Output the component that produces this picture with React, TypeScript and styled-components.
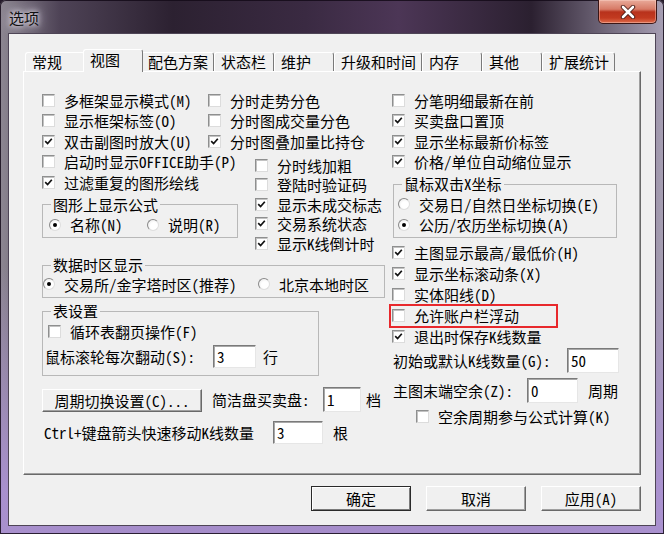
import styled, { createGlobalStyle, css } from 'styled-components'
import type { ReactNode } from 'react'

const GlobalStyle = createGlobalStyle`
  html, body { margin: 0; padding: 0; }
  body { width: 664px; height: 534px; overflow: hidden; background: #241a2a; }
`

const Window = styled.div`
  width: 664px;
  height: 534px;
  box-sizing: border-box;
  padding: 0 8px 8px;
  display: flex;
  flex-direction: column;
  border-radius: 6px 6px 0 0;
  box-shadow: inset 0 0 0 1px rgba(20, 10, 25, 0.85);
  background:
    linear-gradient(180deg, rgba(0, 0, 0, 0) 50%, rgba(170, 145, 208, 0.96) 92%),
    linear-gradient(90deg, #8d8792 0%, #4e4356 9%, #2c2131 26%, #3a2a42 46%, #4c3656 60%, #2b2030 80%, #a79fb4 100%);
  font-family: "Noto Sans Mono CJK SC", "Noto Sans CJK SC", sans-serif;
  font-size: 15px;
  color: #000;
`

const TitleBar = styled.div`
  height: 33px;
  display: flex;
  justify-content: space-between;
  align-items: flex-start;
`

const Caption = styled.div`
  margin: 10px 0 0 1px;
  line-height: 16px;
  color: #111;
  text-shadow: 0 0 5px #e6e2ec, 0 0 9px #d8d2e0, 0 0 12px #cfc8d8;
`

const CloseButton = styled.div`
  width: 59px;
  height: 24px;
  margin-right: -1px;
  box-sizing: border-box;
  border: 1px solid #3b1616;
  border-top: none;
  border-radius: 0 0 5px 5px;
  background: linear-gradient(180deg, #e9aa9a 0%, #d77a66 40%, #b8321c 52%, #c23a20 78%, #df6c4c 100%);
  box-shadow: inset 0 0 0 1px rgba(255, 220, 210, 0.4);
  display: flex;
  align-items: center;
  justify-content: center;
`

const Client = styled.div`
  flex: 1;
  background: #f0f0f0;
  border: 1px solid #4e4556;
  padding: 15px 14px 0;
  display: flex;
  flex-direction: column;
`

const TabStrip = styled.div`
  height: 22px;
  display: flex;
  align-items: flex-end;
  padding-left: 2px;
  position: relative;
  z-index: 1;
`

const Tab = styled.div<{ $active?: boolean }>`
  box-sizing: border-box;
  min-width: 60px;
  height: 19px;
  padding: 0 5px 0 6px;
  border: 1px solid;
  border-color: #fff #7a7a7a transparent #fff;
  border-bottom: none;
  border-radius: 3px 3px 0 0;
  background: #f0f0f0;
  line-height: 18px;
  white-space: nowrap;
  ${p => p.$active && css`
    height: 23px;
    margin: 0 -2px -1px;
    line-height: 20px;
    position: relative;
    z-index: 2;
  `}
`

const Pane = styled.div`
  height: 404px;
  box-sizing: border-box;
  border: 1px solid;
  border-color: #fff #696969 #696969 #fff;
  box-shadow: inset -1px -1px 0 #a0a0a0;
  padding: 18px 0 0 18px;
  display: grid;
  grid-template-columns: 350px 1fr;
  align-items: start;
`

const Column = styled.div`
  display: flex;
  flex-direction: column;
  align-items: flex-start;
`

const TopBlock = styled.div`
  display: grid;
  grid-template-columns: 166px 1fr;
  align-items: start;
`

const SubColumn = styled.div<{ $ml: number; $mt: number }>`
  display: flex;
  flex-direction: column;
  margin: ${p => p.$mt}px 0 0 ${p => p.$ml}px;
`

const Row = styled.div<{ $h: number; $mt?: number; $ml?: number; $gap?: number; $mark?: boolean }>`
  height: ${p => p.$h}px;
  margin: ${p => p.$mt ?? 0}px 0 0 ${p => p.$ml ?? 0}px;
  display: flex;
  align-items: center;
  gap: ${p => p.$gap ?? 9}px;
  white-space: nowrap;
  position: relative;
  ${p => p.$mark && css`
    &::after {
      content: '';
      position: absolute;
      left: -3px;
      top: -1px;
      width: 169px;
      height: 24px;
      box-sizing: border-box;
      border: 2px solid #e8282c;
    }
  `}
`

const Box = styled.span`
  flex: none;
  width: 13px;
  height: 13px;
  box-sizing: border-box;
  border: 1px solid;
  border-color: #8e8f8f #dcdcdc #dcdcdc #8e8f8f;
  box-shadow: inset 1px 1px 0 #c2c2c2;
  background: #fff;
  display: inline-flex;
  align-items: center;
  justify-content: center;
`

const Circle = styled.span<{ $on?: boolean }>`
  flex: none;
  width: 12px;
  height: 12px;
  box-sizing: border-box;
  border-radius: 50%;
  border: 1px solid;
  border-color: #8a8a8a #dedede #dedede #8a8a8a;
  background: radial-gradient(circle at 60% 60%, #fff 40%, #e4e4e4 100%);
  display: inline-flex;
  align-items: center;
  justify-content: center;
  &::after {
    content: '';
    width: 4px;
    height: 4px;
    border-radius: 50%;
    background: ${p => (p.$on ? '#000' : 'transparent')};
  }
`

const GroupBox = styled.fieldset<{ $w: number; $mt: number; $pb: number; $ml?: number }>`
  width: ${p => p.$w}px;
  box-sizing: border-box;
  min-width: 0;
  margin: ${p => p.$mt}px 0 0 ${p => p.$ml ?? 0}px;
  padding: 0 0 ${p => p.$pb}px;
  border: 1px solid #b8b8b8;
`

const Legend = styled.legend<{ $h?: number }>`
  margin-left: 8px;
  padding: 0 2px;
  line-height: ${p => p.$h ?? 20}px;
  height: ${p => p.$h ?? 20}px;
`

const RadioItem = styled.div<{ $w?: number }>`
  ${p => p.$w && `width: ${p.$w}px;`}
  display: flex;
  align-items: center;
  gap: 9px;
`

const Label = styled.span<{ $w?: number }>`
  ${p => p.$w && `width: ${p.$w}px;`}
  flex: none;
`

const Field = styled.div<{ $w: number; $h: number }>`
  flex: none;
  width: ${p => p.$w}px;
  height: ${p => p.$h}px;
  box-sizing: border-box;
  border: 1px solid;
  border-color: #7a7a7a #e6e6e6 #e6e6e6 #7a7a7a;
  box-shadow: inset 1px 1px 0 #a8a8a8;
  background: #fff;
  padding-left: 3px;
  line-height: ${p => p.$h - 2}px;
`

const Button = styled.div<{ $w: number; $primary?: boolean }>`
  flex: none;
  width: ${p => p.$w}px;
  height: 23px;
  box-sizing: border-box;
  border: 1px solid;
  border-color: #fff #696969 #696969 #fff;
  box-shadow: inset -1px -1px 0 #a0a0a0;
  background: #f0f0f0;
  line-height: 21px;
  text-align: center;
  ${p => p.$primary && css`
    border-color: #2a2a2a;
    box-shadow: inset 1px 1px 0 #fff, inset -1px -1px 0 #7a7a7a;
  `}
`

const ToolRow = styled.div<{ $h: number; $mt: number; $ml?: number }>`
  height: ${p => p.$h}px;
  margin: ${p => p.$mt}px 0 0 ${p => p.$ml ?? 0}px;
  display: flex;
  align-items: center;
  white-space: nowrap;
`

const Gap = styled.span<{ $w: number }>`
  flex: none;
  width: ${p => p.$w}px;
`

const Footer = styled.div`
  margin-top: 11px;
  display: flex;
  justify-content: flex-end;
  gap: 15px;
  & > div { height: 25px; line-height: 23px; }
`

const Tick = () => (
  <svg width="9" height="9" viewBox="0 0 9 9">
    <path d="M1.2 4.2 L3.6 6.6 L7.8 1.8" fill="none" stroke="#111" strokeWidth="1.7" />
  </svg>
)

type CheckProps = { on?: boolean; children: ReactNode; h?: number; mt?: number; ml?: number; mark?: boolean }

const Check = ({ on, children, h = 20.5, mt, ml, mark }: CheckProps) => (
  <Row $h={h} $mt={mt} $ml={ml} $mark={mark}>
    <Box>{on && <Tick />}</Box>
    <span>{children}</span>
  </Row>
)

const Radio = ({ on, w, children }: { on?: boolean; w?: number; children: ReactNode }) => (
  <RadioItem $w={w}>
    <Circle $on={on} />
    <span>{children}</span>
  </RadioItem>
)

const tabs = ['常规', '视图', '配色方案', '状态栏', '维护', '升级和时间', '内存', '其他', '扩展统计']

export default function App() {
  return (
    <>
      <GlobalStyle />
      <Window>
        <TitleBar>
          <Caption>选项</Caption>
          <CloseButton>
            <svg width="16" height="14" viewBox="0 0 16 14">
              <path d="M3 2 L13 12 M13 2 L3 12" stroke="#4a1a14" strokeWidth="4.4" strokeLinecap="round" />
              <path d="M3 2 L13 12 M13 2 L3 12" stroke="#fff" strokeWidth="2.6" strokeLinecap="round" />
            </svg>
          </CloseButton>
        </TitleBar>
        <Client>
          <TabStrip>
            {tabs.map(t => (
              <Tab key={t} $active={t === '视图'}>{t}</Tab>
            ))}
          </TabStrip>
          <Pane>
            <Column>
              <TopBlock>
                <Column>
                  <Check>多框架显示模式(M)</Check>
                  <Check>显示框架标签(O)</Check>
                  <Check on>双击副图时放大(U)</Check>
                  <Check>启动时显示OFFICE助手(P)</Check>
                  <Check on>过滤重复的图形绘线</Check>
                  <GroupBox $w={196} $mt={2} $pb={2}>
                    <Legend>图形上显示公式</Legend>
                    <Row $h={20.5} $ml={6} $gap={0}>
                      <Radio on w={98}>名称(N)</Radio>
                      <Radio>说明(R)</Radio>
                    </Row>
                  </GroupBox>
                </Column>
                <Column>
                  <Check>分时走势分色</Check>
                  <Check>分时图成交量分色</Check>
                  <Check on>分时图叠加量比持仓</Check>
                  <SubColumn $ml={47} $mt={4}>
                    <Check h={19.5}>分时线加粗</Check>
                    <Check h={19.5}>登陆时验证码</Check>
                    <Check h={19.5} on>显示未成交标志</Check>
                    <Check h={19.5} on>交易系统状态</Check>
                    <Check h={19.5} on>显示K线倒计时</Check>
                  </SubColumn>
                </Column>
              </TopBlock>
              <GroupBox $w={343} $mt={3} $pb={3}>
                <Legend $h={18}>数据时区显示</Legend>
                <Row $h={20} $gap={0}>
                  <Radio on w={215}>交易所/金字塔时区(推荐)</Radio>
                  <Radio>北京本地时区</Radio>
                </Row>
              </GroupBox>
              <GroupBox $w={277} $mt={3} $pb={7}>
                <Legend>表设置</Legend>
                <Check h={20} ml={5}>循环表翻页操作(F)</Check>
                <ToolRow $h={23} $mt={4} $ml={2}>
                  <Label $w={168}>鼠标滚轮每次翻动(S):</Label>
                  <Field $w={43} $h={23}>3</Field>
                  <Gap $w={7} />
                  <Label>行</Label>
                </ToolRow>
              </GroupBox>
              <ToolRow $h={25} $mt={11}>
                <Button $w={160} style={{ alignSelf: 'flex-end' }}>周期切换设置(C)...</Button>
                <Gap $w={10} />
                <Label $w={111}>简洁盘买卖盘:</Label>
                <Field $w={38} $h={25}>1</Field>
                <Gap $w={5} />
                <Label>档</Label>
              </ToolRow>
              <ToolRow $h={23} $mt={9} $ml={2}>
                <Label $w={229}>Ctrl+键盘箭头快速移动K线数量</Label>
                <Field $w={50} $h={23}>3</Field>
                <Gap $w={10} />
                <Label>根</Label>
              </ToolRow>
            </Column>
            <Column>
              <Check>分笔明细最新在前</Check>
              <Check on>买卖盘口置顶</Check>
              <Check on>显示坐标最新价标签</Check>
              <Check on>价格/单位自动缩位显示</Check>
              <GroupBox $w={224} $mt={2} $ml={1} $pb={2}>
                <Legend>鼠标双击X坐标</Legend>
                <Row $h={20.5} $ml={4} $gap={0}>
                  <Radio>交易日/自然日坐标切换(E)</Radio>
                </Row>
                <Row $h={20.5} $ml={4} $gap={0}>
                  <Radio on>公历/农历坐标切换(A)</Radio>
                </Row>
              </GroupBox>
              <Check h={21} mt={3.5} on>主图显示最高/最低价(H)</Check>
              <Check h={21} on>显示坐标滚动条(X)</Check>
              <Check h={21}>实体阳线(D)</Check>
              <Check h={21} mark>允许账户栏浮动</Check>
              <Check h={21} on>退出时保存K线数量</Check>
              <ToolRow $h={25} $mt={1.5} $ml={1}>
                <Label $w={174}>初始或默认K线数量(G):</Label>
                <Field $w={52} $h={25}>50</Field>
              </ToolRow>
              <ToolRow $h={25} $mt={5} $ml={1}>
                <Label $w={134}>主图末端空余(Z):</Label>
                <Field $w={51} $h={25}>0</Field>
                <Gap $w={10} />
                <Label>周期</Label>
              </ToolRow>
              <Check h={20} mt={3} ml={24}>空余周期参与公式计算(K)</Check>
            </Column>
          </Pane>
          <Footer>
            <Button $w={100} $primary>确定</Button>
            <Button $w={100}>取消</Button>
            <Button $w={100}>应用(A)</Button>
          </Footer>
        </Client>
      </Window>
    </>
  )
}
